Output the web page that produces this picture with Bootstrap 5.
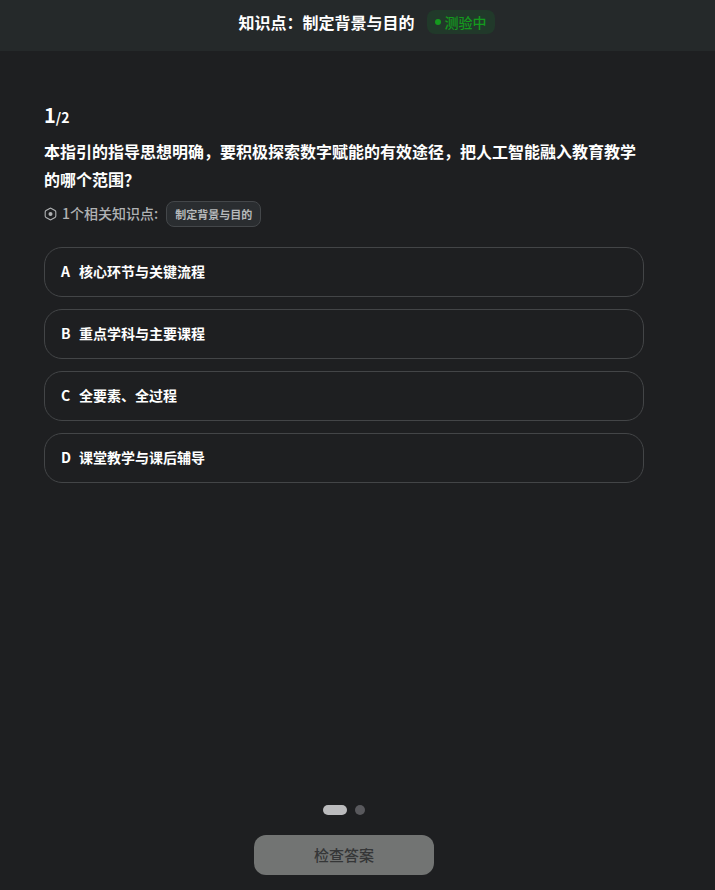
<!DOCTYPE html>
<html lang="zh-CN">
<head>
<meta charset="utf-8">
<title>知识点测验</title>
<link href="https://cdn.jsdelivr.net/npm/bootstrap@5.3.0/dist/css/bootstrap.min.css" rel="stylesheet">
<style>
html, body { height: 890px; overflow: hidden; }
body { background: #1e1f21; color: #fff; font-family: "Noto Sans CJK SC", "Noto Sans", sans-serif; }
.shell { height: 890px; }
.topbar { height: 51px; padding: 0 0 7px 18px; background: #25292a; }
.topbar-title { font-size: 16px; font-weight: 700; line-height: 22px; color: #fff; }
.status-pill { height: 24px; padding: 0 8px; margin-left: 12px; border-radius: 8px; background: #21392a; color: #149a1e; font-size: 14px; font-weight: 500; line-height: 24px; }
.status-dot { width: 6px; height: 6px; border-radius: 50%; background: #149a1e; margin-right: 4px; }
.quiz-body { padding: 49px 71px 0 44px; }
.counter { height: 30px; line-height: 30px; font-weight: 700; }
.counter-now { font-size: 20px; }
.counter-all { font-size: 14px; }
.question { font-size: 16px; font-weight: 700; line-height: 28px; margin: 7px 0 0; }
.kp-row { margin-top: 8px; height: 26px; color: #b0b2b4; font-size: 14px; font-weight: 500; }
.kp-label { padding-bottom: 2px; }
.kp-icon { width: 13px; height: 14px; margin-right: 5px; }
.kp-tag { height: 26px; margin-left: 8px; padding: 0 8px; border: 1px solid #44474a; border-radius: 8px; background: #2a2d30; color: #b6b9bb; font-size: 11px; font-weight: 700; line-height: 24px; }
.options { margin-top: 20px; gap: 12px; }
.opt { height: 50px; padding: 0 16px 2px; border: 1px solid #434547; border-radius: 18px; background: transparent; font-size: 14px; font-weight: 700; color: #fff; }
.opt-key { font-size: 14px; width: 18px; }
.site-foot { padding-right: 27px; }
.dots { gap: 8px; margin-bottom: 20px; }
.dot-on { width: 24px; height: 10px; border-radius: 5px; background: #bbbbbd; }
.dot-off { width: 10px; height: 10px; border-radius: 50%; background: #59595d; }
.check-btn { width: 180px; height: 40px; margin-bottom: 15px; padding: 0; border: 0; border-radius: 12px; background: #727473; color: #353637; font-size: 15px; font-weight: 500; line-height: 40px; }
</style>
</head>
<body>
<div class="shell d-flex flex-column">
  <header class="topbar d-flex align-items-center justify-content-center flex-shrink-0">
    <span class="topbar-title">知识点：制定背景与目的</span>
    <span class="status-pill d-inline-flex align-items-center"><span class="status-dot"></span>测验中</span>
  </header>
  <main class="quiz-body flex-grow-1">
    <div class="counter"><span class="counter-now">1</span><span class="counter-all">/2</span></div>
    <p class="question">本指引的指导思想明确，要积极探索数字赋能的有效途径，把人工智能融入教育教学的哪个范围？</p>
    <div class="kp-row d-flex align-items-center">
      <svg class="kp-icon" viewBox="0 0 13 14" fill="none" aria-hidden="true"><path d="M5.7 1.4 a1.6 1.6 0 0 1 1.6 0 L11 3.5 a1.6 1.6 0 0 1 .8 1.4 V9.1 a1.6 1.6 0 0 1 -.8 1.4 L7.3 12.6 a1.6 1.6 0 0 1 -1.6 0 L2 10.5 a1.6 1.6 0 0 1 -.8 -1.4 V4.9 a1.6 1.6 0 0 1 .8 -1.4 Z" stroke="#b0b2b4" stroke-width="1.1"/><circle cx="6.5" cy="7" r="2" fill="#b0b2b4"/></svg>
      <span class="kp-label">1个相关知识点:</span>
      <span class="kp-tag">制定背景与目的</span>
    </div>
    <div class="options d-flex flex-column">
      <div class="opt d-flex align-items-center"><span class="opt-key">A</span><span>核心环节与关键流程</span></div>
      <div class="opt d-flex align-items-center"><span class="opt-key">B</span><span>重点学科与主要课程</span></div>
      <div class="opt d-flex align-items-center"><span class="opt-key">C</span><span>全要素、全过程</span></div>
      <div class="opt d-flex align-items-center"><span class="opt-key">D</span><span>课堂教学与课后辅导</span></div>
    </div>
  </main>
  <footer class="site-foot d-flex flex-column align-items-center flex-shrink-0">
    <div class="dots d-flex"><span class="dot-on"></span><span class="dot-off"></span></div>
    <button type="button" class="btn check-btn">检查答案</button>
  </footer>
</div>
<script src="https://cdn.jsdelivr.net/npm/bootstrap@5.3.0/dist/js/bootstrap.bundle.min.js"></script>
</body>
</html>
